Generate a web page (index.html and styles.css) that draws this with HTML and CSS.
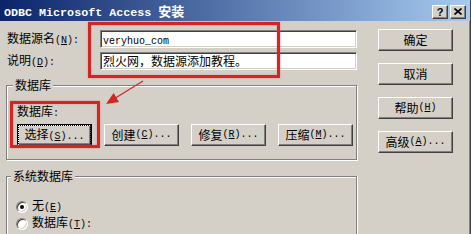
FILE: index.html
```html
<!DOCTYPE html>
<html lang="zh-CN">
<head>
<meta charset="utf-8">
<title>ODBC Microsoft Access 安装</title>
<link rel="stylesheet" href="styles.css">
</head>
<body>
<div class="window">
  <div class="titlebar">
    <div class="title"><span class="en">ODBC Microsoft Access </span>安装</div>
    <div class="cap">
      <div class="cbtn">?</div>
      <div class="cbtn"><svg width="8" height="7" viewBox="0 0 8 7"><path d="M0.5 0.5 L7.5 6.5 M7.5 0.5 L0.5 6.5" stroke="#000" stroke-width="1.6" fill="none"/></svg></div>
    </div>
  </div>
  <div class="content">
    <div class="left">
      <div class="fields">
        <label class="lbl">数据源名<span class="en">(<u>N</u>):</span></label>
        <div class="input"><span class="mono">veryhuo_com</span></div>
        <label class="lbl">说明<span class="en">(<u>D</u>):</span></label>
        <div class="input">烈火网，数据源添加教程。</div>
      </div>
      <fieldset class="group g1">
        <legend>数据库</legend>
        <div class="gbody">
          <div class="sub">数据库<span class="en">:</span></div>
          <div class="btnrow">
            <div class="btn default"><span class="focus">选择<span class="en">(<u>S</u>)...</span></span></div>
            <div class="btn">创建<span class="en">(<u>C</u>)...</span></div>
            <div class="btn">修复<span class="en">(<u>R</u>)...</span></div>
            <div class="btn">压缩<span class="en">(<u>M</u>)...</span></div>
          </div>
        </div>
      </fieldset>
      <fieldset class="group g2">
        <legend>系统数据库</legend>
        <div class="gbody2">
          <div class="radio"><span class="rdot checked"></span><span>无<span class="en">(<u>E</u>)</span></span></div>
          <div class="radio"><span class="rdot"></span><span>数据库<span class="en">(<u>T</u>):</span></span></div>
        </div>
      </fieldset>
    </div>
    <div class="right">
      <div class="btn">确定</div>
      <div class="btn">取消</div>
      <div class="btn">帮助<span class="en">(<u>H</u>)</span></div>
      <div class="btn">高级<span class="en">(<u>A</u>)...</span></div>
    </div>
  </div>
  <div class="mark m1"></div>
  <div class="mark m2"></div>
  <svg class="arrow" width="471" height="234" viewBox="0 0 471 234">
    <line x1="143" y1="81" x2="113" y2="99.5" stroke="#d42424" stroke-width="1.2"/>
    <polygon points="106,104 119,102 113.6,93" fill="#d42424"/>
  </svg>
</div>
</body>
</html>
```

FILE: styles.css
```css
* { box-sizing: border-box; }
html, body { margin: 0; padding: 0; }
body {
  background: #d4d0c8;
  width: 471px;
  height: 234px;
  overflow: hidden;
  font-family: "Noto Sans CJK SC", sans-serif;
  font-size: 12px;
  color: #000;
}
.en { font-family: "Liberation Mono", "Noto Sans CJK SC", monospace; font-size: 10px; }
.mono { font-family: "Liberation Mono", monospace; font-size: 10px; }
u { text-underline-offset: 1px; }

.window {
  position: relative;
  width: 471px;
  height: 234px;
  overflow: hidden;
  border-right: 1px solid #404040;
  box-shadow: inset -1px 0 0 #808080;
}
.titlebar {
  height: 21px;
  display: flex;
  align-items: center;
  justify-content: space-between;
  padding-left: 4px;
  background: linear-gradient(to right, #0a246a, #a6caf0);
  color: #fff;
}
.title {
  font-weight: bold;
  font-size: 13px;
  line-height: 14px;
  padding-top: 3px;
  white-space: nowrap;
}
.title .en { font-size: 11.7px; font-weight: bold; }
.cap { display: flex; gap: 2px; margin-right: 4px; padding-top: 2px; }
.cbtn {
  width: 16px;
  height: 14px;
  background: #d4d0c8;
  border: 1px solid;
  border-color: #fff #404040 #404040 #fff;
  box-shadow: inset -1px -1px 0 #808080;
  display: flex;
  align-items: center;
  justify-content: center;
  color: #000;
  font: bold 11px "Liberation Sans", sans-serif;
}

.content { display: flex; }
.left { width: 358px; }
.fields {
  display: grid;
  grid-template-columns: 93px 257px;
  row-gap: 4px;
  margin: 9px 0 0 7px;
  align-items: center;
}
.lbl { line-height: 14px; white-space: nowrap; }
.input {
  height: 18px;
  background: #fff;
  border: 1px solid;
  border-color: #808080 #fff #fff #808080;
  box-shadow: inset 1px 1px 0 #404040, inset -1px -1px 0 #d4d0c8;
  padding: 0 3px 0 2px;
  line-height: 16px;
  white-space: nowrap;
}

.group {
  margin: 8px 0 0 6px;
  width: 351px;
  min-width: 0;
  padding: 0;
  border: 1px solid #808080;
  box-shadow: 1px 1px 0 #fff, inset 1px 1px 0 #fff;
}
.group legend {
  padding: 0 2px;
  line-height: 14px;
  background: #d4d0c8;
  margin-left: 6px;
}
.g2 { margin-top: 9px; height: 68px; border-bottom: 0; box-shadow: inset 1px 1px 0 #fff, 1px 0 0 #fff; }
.g2 legend { margin-left: 4px; }
.gbody { padding: 12px 0 13px 10px; }
.sub { line-height: 14px; }
.btnrow { display: flex; gap: 12px; margin-top: 3px; }
.btn {
  width: 75px;
  height: 22px;
  background: #d4d0c8;
  border: 1px solid;
  border-color: #fff #404040 #404040 #fff;
  box-shadow: inset -1px -1px 0 #808080;
  display: flex;
  align-items: center;
  justify-content: center;
  white-space: nowrap;
  line-height: 14px;
}
.btn.default {
  border: 1px solid #000;
  box-shadow: inset 1px 1px 0 #fff, inset -1px -1px 0 #404040, inset -2px -2px 0 #808080;
}
.focus { border: 1px dotted #000; padding: 1px 5px; }

.gbody2 { padding: 15px 0 0 9px; }
.radio { display: flex; align-items: center; gap: 4px; height: 17px; line-height: 14px; }
.rdot {
  position: relative;
  width: 12px;
  height: 12px;
  border-radius: 50%;
  background: #fff;
  border: 1px solid;
  border-color: #808080 #fff #fff #808080;
  box-shadow: inset 1px 1px 0 #404040, inset -1px -1px 0 #d4d0c8;
  flex: none;
}
.rdot.checked::after {
  content: "";
  position: absolute;
  left: 3px;
  top: 3px;
  width: 4px;
  height: 4px;
  border-radius: 50%;
  background: #000;
}

.right {
  display: flex;
  flex-direction: column;
  gap: 12px;
  margin: 8px 0 0 20px;
}

.mark {
  position: absolute;
  border: 3px solid #d42424;
  box-shadow: 0 0 2px rgba(240, 110, 110, 0.7), inset 0 0 2px rgba(240, 110, 110, 0.7);
}
.m1 { left: 88px; top: 22px; width: 192px; height: 56px; }
.m2 { left: 10px; top: 101px; width: 90px; height: 47px; }
.arrow { position: absolute; left: 0; top: 0; pointer-events: none; }
```
